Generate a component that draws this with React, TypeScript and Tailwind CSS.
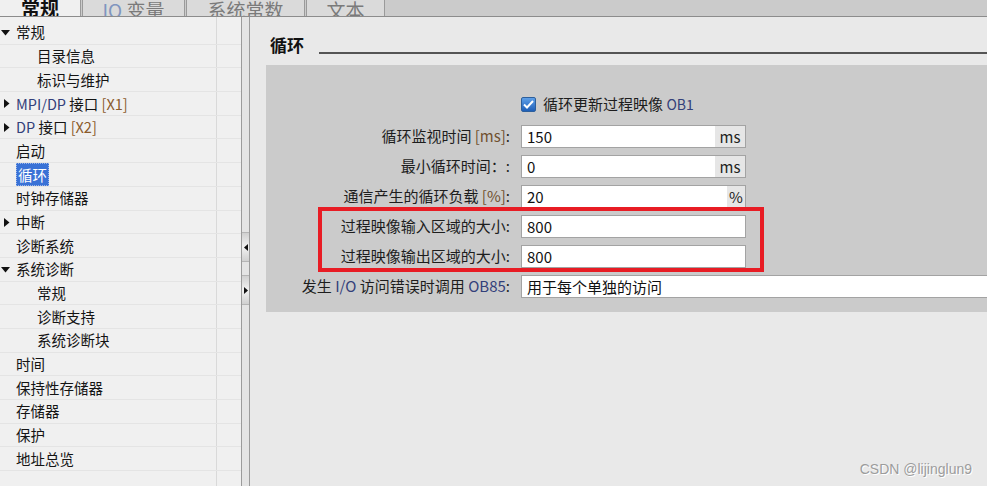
import React from "react";

type Node = { label: React.ReactNode; level: 0 | 1; arrow?: "open" | "closed"; selected?: boolean };

const brk = "text-[#70502f]";
const blu = "text-[#33407a]";

const tree: Node[] = [
  { label: "常规", level: 0, arrow: "open" },
  { label: "目录信息", level: 1 },
  { label: "标识与维护", level: 1 },
  {
    label: (
      <>
        <span className={blu}>MPI/DP</span> 接口 <span className="text-[#8a5a2b]">[X1]</span>
      </>
    ),
    level: 0,
    arrow: "closed",
  },
  {
    label: (
      <>
        <span className={blu}>DP</span> 接口 <span className="text-[#8a5a2b]">[X2]</span>
      </>
    ),
    level: 0,
    arrow: "closed",
  },
  { label: "启动", level: 0 },
  { label: "循环", level: 0, selected: true },
  { label: "时钟存储器", level: 0 },
  { label: "中断", level: 0, arrow: "closed" },
  { label: "诊断系统", level: 0 },
  { label: "系统诊断", level: 0, arrow: "open" },
  { label: "常规", level: 1 },
  { label: "诊断支持", level: 1 },
  { label: "系统诊断块", level: 1 },
  { label: "时间", level: 0 },
  { label: "保持性存储器", level: 0 },
  { label: "存储器", level: 0 },
  { label: "保护", level: 0 },
  { label: "地址总览", level: 0 },
];

const Arrow = ({ dir }: { dir: "open" | "closed" }) =>
  dir === "open" ? (
    <svg width="9" height="6" viewBox="0 0 9 6" className="absolute left-[1px] top-[9px]">
      <path d="M0 0h9L4.5 5.5z" fill="#111" />
    </svg>
  ) : (
    <svg width="6" height="9" viewBox="0 0 6 9" className="absolute left-[4px] top-[7px]">
      <path d="M0 0v9l5.5-4.5z" fill="#111" />
    </svg>
  );

const Field = ({ value, unit, wide }: { value: string; unit?: string; wide?: boolean }) => (
  <div
    className={`flex h-[23px] border border-[#a3a3a3] bg-white ${wide ? "-mr-[2px] flex-1" : "w-[225px]"}`}
  >
    <div className="flex-1 pl-[5px] leading-[21px] text-[#111]">{value}</div>
    {unit && (
      <div
        className={`bg-[#e6e6e6] leading-[21px] text-[#222] ${unit === "%" ? "w-[18px] text-center" : "w-[30px] text-center"}`}
      >
        {unit}
      </div>
    )}
  </div>
);

const Row = ({ label, children }: { label: React.ReactNode; children: React.ReactNode }) => (
  <div className="flex h-[23px] items-center">
    <div className="w-[245px] shrink-0 pr-[1px] text-right text-[#1d1d1d]">{label}</div>
    <div className="ml-[10px] flex flex-1">{children}</div>
  </div>
);

export default function App() {
  return (
    <div
      className="relative flex h-[486px] w-[987px] flex-col overflow-hidden bg-[#e9e9e9]"
      style={{ fontFamily: '"Noto Sans CJK SC", "Noto Sans", sans-serif' }}
    >
      {/* tabs */}
      <div className="flex h-[17px] shrink-0 items-end overflow-hidden border-b border-[#8c8c8c] bg-[#cbcbcb]">
        <div className="flex h-[17px] w-[81px] items-end justify-center border-r border-[#9a9a9a] bg-[#f0f0f0] pb-[1px]">
          <span className="-mb-[2px] text-[19px] font-bold leading-[18px] text-[#111]">常规</span>
        </div>
        <div className="ml-[1px] flex h-[16px] w-[103px] items-end justify-center border-x border-[#9a9a9a] bg-[#dadada]">
          <span className="-mb-[3px] text-[19px] leading-[18px] text-[#7a7a7a]">
            <span className="text-[#7f95bf]">IO</span> 变量
          </span>
        </div>
        <div className="ml-[1px] flex h-[16px] w-[119px] items-end justify-center border-x border-[#9a9a9a] bg-[#dadada]">
          <span className="-mb-[3px] text-[19px] leading-[18px] text-[#7a7a7a]">系统常数</span>
        </div>
        <div className="ml-[1px] flex h-[16px] w-[79px] items-end justify-center border-x border-[#9a9a9a] bg-[#dadada]">
          <span className="-mb-[3px] text-[19px] leading-[18px] text-[#7a7a7a]">文本</span>
        </div>
      </div>

      <div className="flex flex-1">
        {/* tree */}
        <div className="relative w-[241px] shrink-0 bg-[#f0f0f0] pt-[4px] text-[14.5px] text-[#141414]">
          <div className="absolute bottom-0 left-[216px] top-0 w-px bg-[#d9d9d9]" />
          {tree.map((n, i) => (
            <div key={i} className="relative flex h-[23.7px] items-center border-b border-[#e4e4e4]">
              {n.arrow && <Arrow dir={n.arrow} />}
              <div className={n.level === 0 ? "pl-[16px]" : "pl-[37px]"}>
                {n.selected ? (
                  <span className="border border-dotted border-[#9fb8e8] bg-[#3a72d6] px-px text-white">{n.label}</span>
                ) : (
                  <span className="whitespace-nowrap">{n.label}</span>
                )}
              </div>
            </div>
          ))}
        </div>

        {/* splitter */}
        <div className="flex w-[9px] shrink-0 flex-col border-x border-[#9b9b9b] bg-[#e4e4e4]">
          <div className="h-[215px]" />
          <div className="flex h-[30px] items-center justify-center border-y border-[#b5b5b5] bg-gradient-to-b from-[#d0d0d0] via-[#f2f2f2] to-[#d0d0d0]">
            <svg width="4" height="7" viewBox="0 0 4 7">
              <path d="M4 0v7L0 3.5z" fill="#111" />
            </svg>
          </div>
          <div className="h-[13px]" />
          <div className="flex h-[30px] items-center justify-center border-y border-[#b5b5b5] bg-gradient-to-b from-[#d0d0d0] via-[#f2f2f2] to-[#d0d0d0]">
            <svg width="4" height="7" viewBox="0 0 4 7">
              <path d="M0 0v7l4-3.5z" fill="#111" />
            </svg>
          </div>
        </div>

        {/* content */}
        <div className="flex flex-1 flex-col pl-[16px] pt-[18px]">
          <div className="flex items-end pl-[4px]">
            <span className="text-[17px] font-bold leading-[20px] text-[#111]">循环</span>
            <div className="mb-[1px] ml-[15px] h-[2px] flex-1 bg-[#555]" />
          </div>
          <div className="mt-[10px] flex flex-col gap-[7px] bg-[#cbcbcb] pb-[14px] pt-[28px] text-[15px]">
            <div className="mb-[3px] flex h-[22px] items-center">
              <div className="w-[255px] shrink-0" />
              <div className="flex h-[15px] w-[15px] items-center justify-center rounded-[2px] border border-[#2d5f9c] bg-gradient-to-b from-[#5fa0e8] to-[#1e5fb8]">
                <svg width="11" height="9" viewBox="0 0 11 9">
                  <path d="M1 4.5l3 3L10 1" stroke="#fff" strokeWidth="2" fill="none" />
                </svg>
              </div>
              <span className="ml-[7px] text-[#1d1d1d]">
                循环更新过程映像 <span className="text-[14px] text-[#33407a]">OB1</span>
              </span>
            </div>
            <Row
              label={
                <>
                  循环监视时间 <span className={brk}>[ms]</span>:
                </>
              }
            >
              <Field value="150" unit="ms" />
            </Row>
            <Row label="最小循环时间：:">
              <Field value="0" unit="ms" />
            </Row>
            <Row
              label={
                <>
                  通信产生的循环负载 <span className={brk}>[%]</span>:
                </>
              }
            >
              <Field value="20" unit="%" />
            </Row>
            <Row label="过程映像输入区域的大小:">
              <Field value="800" />
            </Row>
            <Row label="过程映像输出区域的大小:">
              <Field value="800" />
            </Row>
            <Row
              label={
                <>
                  发生 <span className={blu}>I/O</span> 访问错误时调用 <span className={blu}>OB85</span>:
                </>
              }
            >
              <Field value="用于每个单独的访问" wide />
            </Row>
          </div>
        </div>
      </div>

      {/* annotation */}
      <div className="absolute left-[318px] top-[207px] h-[65px] w-[446px] border-[4px] border-[#e81c24]" />

      <div
        className="absolute right-[15px] top-[459px] text-[14px] text-[#9c9c9c]"
        style={{ fontFamily: '"Liberation Sans", sans-serif', textShadow: "1px 1px 0 #fff" }}
      >
        CSDN @lijinglun9
      </div>
    </div>
  );
}
